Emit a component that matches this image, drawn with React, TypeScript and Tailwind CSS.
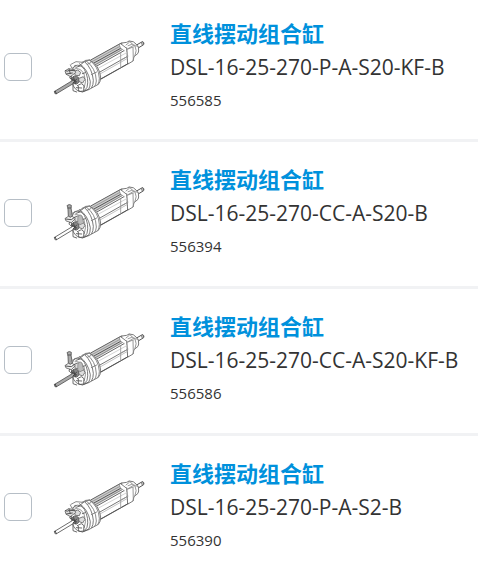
import { useState } from "react";

type Variant = "plain" | "lever";

interface Product {
  id: string;
  name: string;
  type: string;
  variant: Variant;
  darkRod: boolean;
}

const PRODUCTS: Product[] = [
  { id: "556585", name: "直线摆动组合缸", type: "DSL-16-25-270-P-A-S20-KF-B", variant: "plain", darkRod: true },
  { id: "556394", name: "直线摆动组合缸", type: "DSL-16-25-270-CC-A-S20-B", variant: "lever", darkRod: false },
  { id: "556586", name: "直线摆动组合缸", type: "DSL-16-25-270-CC-A-S20-KF-B", variant: "lever", darkRod: true },
  { id: "556390", name: "直线摆动组合缸", type: "DSL-16-25-270-P-A-S2-B", variant: "plain", darkRod: false }
];

function CylinderDrawing({ variant, darkRod }: { variant: Variant; darkRod: boolean }) {
  return (
    <svg
      viewBox="150 50 300 180"
      className="h-[60px] w-[100px] shrink-0"
      fill="none"
      stroke="#666"
      strokeWidth="2.6"
      strokeLinejoin="round"
      strokeLinecap="round"
      aria-hidden="true"
    >
      {/* rear rod */}
      <path d="M408 75 L427 64 Q433 65 431 73 L413 84 Z" fill="#fff" stroke="#555" strokeWidth="3" />
      <ellipse cx="428" cy="69" rx="3" ry="5" fill="#ccc" />

      {/* rear cap */}
      <path d="M366 68 L380 66 L388 62 Q402 62 408 71 Q418 78 416 92 L414 99 L402 109 L399 122 L384 131 L366 110 Z" fill="#fff" />
      <path d="M388 62 Q398 76 414 78 M388 66 L378 74 M384 76 Q394 68 405 77 Q412 90 405 106 M380 82 L382 130 M384 86 L399 80 M399 80 L400 121 M366 68 L360 76 L379 88 L396 78" stroke="#888" />

      {/* profile barrel */}
      <path d="M270 122 L362 70 L380 84 L383 131 L300 178 Z" fill="#fff" />
      <path d="M272 119 L358 71 L366 90 L290 135 Z" fill="#ccc" stroke="none" />
      <path d="M272 119 L364 68" stroke="#666" strokeWidth="3" />
      <path d="M276 124 L358 79" stroke="#999" strokeWidth="3" />
      <path d="M280 129 L362 84" stroke="#555" strokeWidth="3" />
      <path d="M284 134 L366 88" stroke="#888" strokeWidth="3" />
      <path d="M287 139 L372 91" stroke="#666" strokeWidth="3" />
      <path d="M292 145 L380 97" stroke="#ccc" />
      <path d="M298 156 L381 109" stroke="#777" strokeWidth="3" />
      <path d="M300 161 L381 115" stroke="#bbb" />
      <path d="M302 176 L384 130" stroke="#555" strokeWidth="3" />
      <path d="M358 74 L360 82 L372 91 M362 97 L362 142 M365 118 L384 108" stroke="#999" />

      {/* swivel housing rings */}
      <path d="M254 124 L268 119 Q298 135 302 170 Q302 185 295 192 L266 208 Q254 216 236 211 L222 150 Z" fill="#fff" />
      <path d="M268 119 Q296 138 298 174 Q298 186 294 192 M258 121 Q288 143 289 182 Q288 193 284 198" stroke="#777" />
      <path d="M254 124 Q277 145 280 180 Q280 194 275 202 M238 130 Q264 146 271 184 Q271 199 266 207" stroke="#666" />
      <path d="M246 126 L258 120 L268 119 M262 132 L272 127 M274 163 L290 155" stroke="#777" />

      {/* front face */}
      <path d="M225 136 Q241 130 253 147 Q268 174 261 201 Q252 218 233 211 Q217 201 215 177 Q211 149 225 136 Z" fill="#fff" />
      <path d="M225 145 Q242 142 252 161 Q261 184 253 202" stroke="#888" />
      <path d="M215 174 Q222 161 235 171 Q243 184 230 191 Q218 193 215 174 Z" fill="#888" stroke="#555" />
      <path d="M219 192 L219 211 L230 215 M232 196 L244 190 L252 196 L251 210 M235 198 L235 212 L248 215 L264 207 M229 202 L245 203" stroke="#555" />
      <path d="M224 153 L233 149 L242 156 L238 166 L227 165 Z M237 174 L250 169 L255 177 L248 188 L238 184 Z" fill="#ddd" stroke="#666" />
      <path d="M228 141 L240 137 M247 160 L256 157" stroke="#555" />

      {/* stops */}
      {variant === "plain" ? (
        <>
          <path d="M196 151 L206 145 L224 148 L227 157 L211 169 L199 162 Z" fill="#ddd" />
          <path d="M196 151 Q202 155 208 150 L224 151 M199 161 L217 158 M207 146 L211 160 M211 168 Q205 174 214 177" stroke="#555" strokeWidth="3" />
          <path d="M213 132 L228 124 L249 126 M211 134 L216 144 L227 137" stroke="#777" />
        </>
      ) : (
        <>
          <path d="M196 156 L205 150 L217 150 L226 157 L214 169 L199 164 Z" fill="#eee" stroke="#666" />
          <path d="M202 117 Q208 112 214 117 L213 126 L217 148 L211 153 L205 149 L204 126 Z" fill="#aaa" stroke="#666" strokeWidth="3" />
          <path d="M203 125 L213 125 M197 158 L214 160 L225 152 M209 168 Q203 175 215 179" stroke="#555" strokeWidth="3" />
          <path d="M235 148 Q241 143 246 149 L251 170 L240 175 L234 169 Z" fill="#bbb" stroke="#888" />
          <path d="M213 143 L224 137 L248 127" stroke="#777" />
        </>
      )}

      {/* front rod */}
      <path d="M164 213 L220 179 L226 186 L168 221 Q162 221 164 213 Z" fill={darkRod ? "#aaa" : "#fff"} stroke="#555" />
      <path d="M166 213 L169 220" stroke="#444" strokeWidth="3" />
      <path d="M216 176 L230 185 M221 172 L226 190 M230 176 L219 188" stroke="#444" strokeWidth="3" />
    </svg>
  );
}

function ProductRow({
  product,
  checked,
  onToggle
}: {
  product: Product;
  checked: boolean;
  onToggle: (id: string) => void;
}) {
  return (
    <li className="flex items-start border-b-[3px] border-[#f1f2f4] pt-[21px] pb-[27px] pl-1 first:pt-[17px] first:pb-[26px] last:border-b-0">
      <input
        type="checkbox"
        className="mt-9 size-7 shrink-0 appearance-none rounded-md border border-[#b6bec6] bg-white checked:bg-[#0091dc]"
        aria-labelledby={`product-${product.id}`}
        checked={checked}
        onChange={() => onToggle(product.id)}
      />
      <div className="mt-5 ml-[18px] shrink-0">
        <CylinderDrawing variant={product.variant} darkRod={product.darkRod} />
      </div>
      <div className="ml-5 min-w-0 pb-px whitespace-nowrap text-[#333]">
        <a
          id={`product-${product.id}`}
          href={`#${product.id}`}
          className="block font-['Noto_Sans_CJK_SC',sans-serif] text-[22px] leading-[30px] font-bold text-[#0091dc]"
        >
          {product.name}
        </a>
        <p className="mt-1 text-[21px] leading-8">{product.type}</p>
        <p className="mt-[5px] text-[15px] leading-6">{product.id}</p>
      </div>
    </li>
  );
}

export default function App() {
  const [selected, setSelected] = useState<string[]>([]);

  function handleToggle(id: string) {
    setSelected((prev) => (prev.includes(id) ? prev.filter((item) => item !== id) : [...prev, id]));
  }

  return (
    <main className="min-h-screen overflow-hidden bg-white font-['Open_Sans','Noto_Sans_CJK_SC',sans-serif]">
      <ul>
        {PRODUCTS.map((product) => (
          <ProductRow
            key={product.id}
            product={product}
            checked={selected.includes(product.id)}
            onToggle={handleToggle}
          />
        ))}
      </ul>
    </main>
  );
}
